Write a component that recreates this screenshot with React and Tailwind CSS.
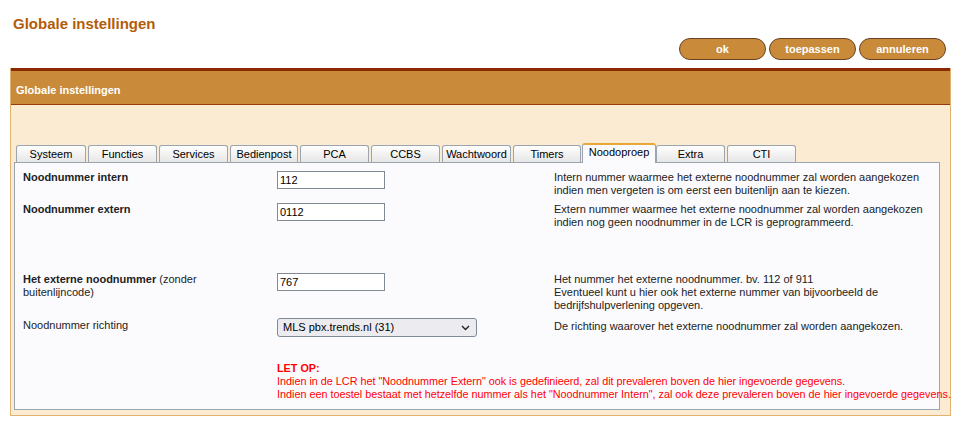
import React from "react";

const tabs = [
  { name: "Systeem", w: "w-[70px]" },
  { name: "Functies", w: "w-[69px]" },
  { name: "Services", w: "w-[69px]" },
  { name: "Bedienpost", w: "w-[68px]" },
  { name: "PCA", w: "w-[69px]" },
  { name: "CCBS", w: "w-[69px]" },
  { name: "Wachtwoord", w: "w-[69px]" },
  { name: "Timers", w: "w-[68px]" },
  { name: "Noodoproep", w: "w-[74px]", active: true },
  { name: "Extra", w: "w-[69px]" },
  { name: "CTI", w: "w-[69px]" },
];

function Tab({ name, w, active }) {
  if (active) {
    return (
      <div
        className={`${w} -mb-[1px] -ml-[1px] h-[20px] rounded-t-[3px] border border-b-0 border-[#9aa5b0] border-t-2 border-t-[#e8a838] bg-[#fbfbfe] text-center text-[11px] leading-[15px] text-black`}
      >
        {name}
      </div>
    );
  }
  return (
    <div
      className={`${w} mr-[2px] h-[17px] rounded-t-[3px] border border-b-0 border-[#9aa5b0] bg-gradient-to-b from-white to-[#e6e6e6] text-center text-[11px] leading-[16px] text-black`}
    >
      {name}
    </div>
  );
}

function Row({ label, input, desc, className = "" }) {
  return (
    <div className={`flex items-start ${className}`}>
      <div className="w-[254px] pr-2 text-[11px] leading-[13px] text-[#222]">
        {label}
      </div>
      <div className="w-[277px]">{input}</div>
      <div className="flex-1 text-[11px] leading-[13px] text-[#222]">{desc}</div>
    </div>
  );
}

function TextBox({ value }) {
  return (
    <div className="h-[18px] w-[108px] border border-[#7f8a96] bg-white px-[2px] text-[11px] leading-[16px] text-black">
      {value}
    </div>
  );
}

export default function App() {
  return (
    <div
      className="min-h-[426px] bg-white"
      style={{ fontFamily: '"Liberation Sans", Arial, sans-serif' }}
    >
      <div className="px-[13px] pt-[15px]">
        <h1 className="text-[15px] font-bold leading-[18px] text-[#b35c08]">
          Globale instellingen
        </h1>
      </div>

      <div className="mt-[5px] flex justify-end gap-[3px] pr-[15px]">
        {["ok", "toepassen", "annuleren"].map((b) => (
          <button
            key={b}
            className="h-[22px] w-[87px] rounded-full border border-[#6b4226] bg-[#c98b3a] text-[11px] font-bold text-white"
          >
            {b}
          </button>
        ))}
      </div>

      <div className="mx-[10px] mt-[8px] w-[941px] border-x border-b border-x-[#e2b271] border-b-[#e2b271]">
        <div className="h-[37px] border-t-[3px] border-b border-t-[#8b2a00] border-b-[#9a3a0a] bg-[#c98b3a] pl-[5px] pt-[13px] text-[11px] font-bold leading-[13px] text-white">
          Globale instellingen
        </div>

        <div className="bg-[#faebd2] pb-[5px] pl-[3px] pr-[10px] pt-[38px]">
          <div className="flex items-end pl-[2px]">
            {tabs.map((t) => (
              <Tab key={t.name} {...t} />
            ))}
          </div>

          <div className="h-[248px] border border-[#9aa5b0] bg-[#fbfbfe] pl-[8px] pt-[8px]">
            <Row
              label={<b>Noodnummer intern</b>}
              input={<TextBox value="112" />}
              desc={
                <>
                  Intern nummer waarmee het externe noodnummer zal worden aangekozen
                  <br />
                  indien men vergeten is om eerst een buitenlijn aan te kiezen.
                </>
              }
            />
            <Row
              className="mt-[6px]"
              label={<b>Noodnummer extern</b>}
              input={<TextBox value="0112" />}
              desc={
                <>
                  Extern nummer waarmee het externe noodnummer zal worden aangekozen
                  <br />
                  indien nog geen noodnummer in de LCR is geprogrammeerd.
                </>
              }
            />
            <Row
              className="mt-[44px]"
              label={
                <>
                  <b>Het externe noodnummer</b> (zonder
                  <br />
                  buitenlijncode)
                </>
              }
              input={<TextBox value="767" />}
              desc={
                <>
                  Het nummer het externe noodnummer. bv. 112 of 911
                  <br />
                  Eventueel kunt u hier ook het externe nummer van bijvoorbeeld de
                  <br />
                  bedrijfshulpverlening opgeven.
                </>
              }
            />
            <Row
              className="mt-[6px]"
              label={<div className="pt-[1px]">Noodnummer richting</div>}
              input={
                <div className="flex h-[19px] w-[200px] items-center justify-between rounded-[3px] border border-[#7f8a96] bg-[#ececf0] pl-[5px] pr-[6px] text-[11px] text-black">
                  <span>MLS pbx.trends.nl (31)</span>
                  <svg width="9" height="6" viewBox="0 0 9 6">
                    <path d="M1 1 L4.5 4.5 L8 1" fill="none" stroke="#222" strokeWidth="1.4" />
                  </svg>
                </div>
              }
              desc={<div className="pt-[2px]">De richting waarover het externe noodnummer zal worden aangekozen.</div>}
            />

            <div className="ml-[254px] mt-[25px] whitespace-nowrap text-[10.8px] leading-[13px] text-[#ff0000]">
              <b>LET OP:</b>
              <br />
              Indien in de LCR het "Noodnummer Extern" ook is gedefinieerd, zal dit prevaleren boven de hier ingevoerde gegevens.
              <br />
              Indien een toestel bestaat met hetzelfde nummer als het "Noodnummer Intern", zal ook deze prevaleren boven de hier ingevoerde gegevens.
            </div>
          </div>
        </div>
      </div>
    </div>
  );
}
